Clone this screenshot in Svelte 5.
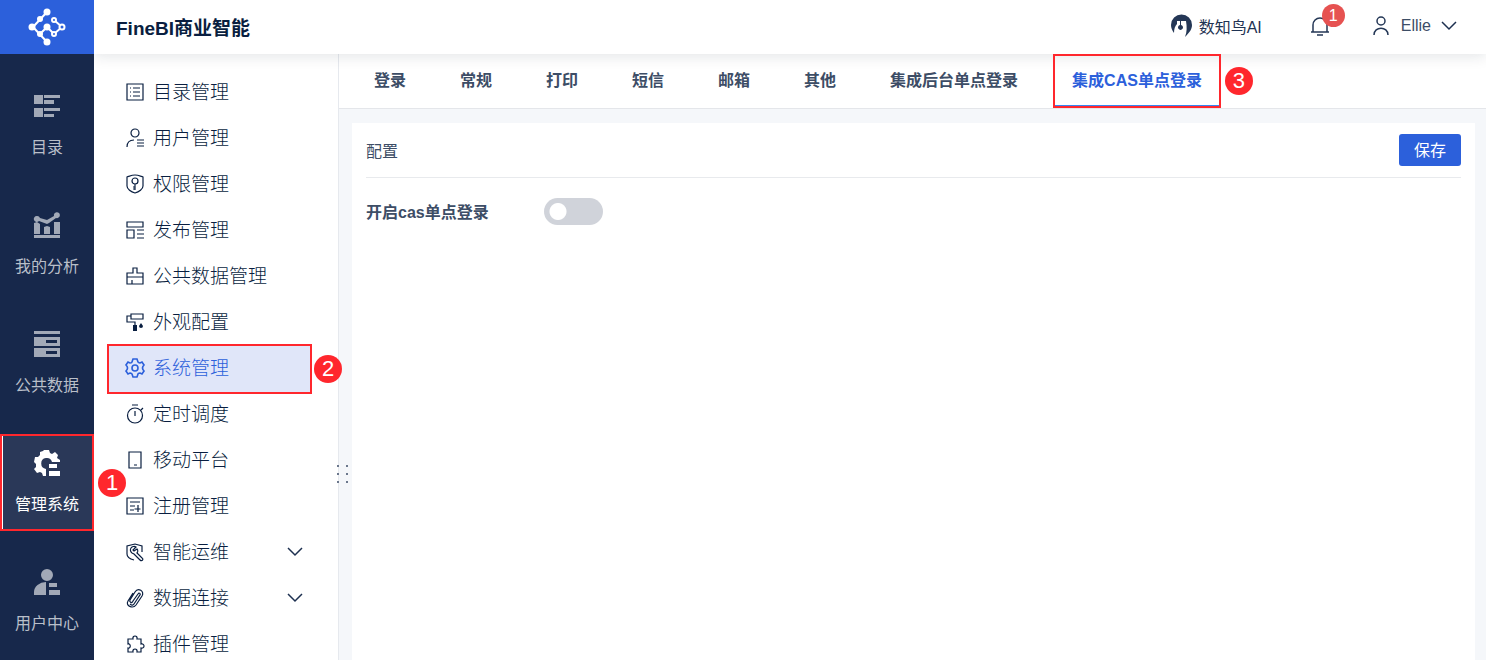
<script lang="ts">
  type Icon = { line?: string; fill?: string };

  const railItems: { label: string; icon: string; step?: number }[] = [
    {
      label: "目录",
      icon: "M0 2h9v9H0zM10 2h16v3H10zM10 7h10v4H10zM0 15h9v9H0zM10 15h16v3H10zM10 21h10v3H10z",
    },
    {
      label: "我的分析",
      icon: "M0 23h26v3H0zM0 11l3-1 3 2v10H0zM10 15l3-1 3 1v7h-6zM20 10h6v12h-6zM3 4a3 3 0 0 1 3 2l7 2 7-4a3 3 0 1 1 2 2l-7 5-2 1-8-3a3 3 0 1 1-2-5z",
    },
    {
      label: "公共数据",
      icon: "M0 0h26v3H0zM0 6h26v9H0zM12 9v3h11V9zM0 17h26v9H0zM12 20v3h11v-3z",
    },
    {
      label: "管理系统",
      step: 1,
      icon: "M10 0h5l1 3 2 1 3-2 3 3-1 3 3 2v2h-8a5.500 5.500 0 1 0-6 7v7H9l-1-3-2-1-3 1-3-4 2-2v-3l-2-2 1-5h3l2-2V2l3-1zM15 14h8v4h-8zM15 21h11v5H15z",
    },
    {
      label: "用户中心",
      icon: "M13 0a6 6 0 1 1 0 12 6 6 0 0 1 0-12zM12 13v13H0v-3a12 10 0 0 1 12-10zM15 14h8v4h-8zM15 21h11v5H15z",
    },
  ];

  const menu: { label: string; icon: Icon; step?: number; sub?: boolean }[] = [
    {
      label: "目录管理",
      icon: { line: "M1 1h16v16H1zM4 5h1M7 5h7M4 9h1M7 9h7M4 13h1M7 13h7" },
    },
    {
      label: "用户管理",
      icon: {
        line: "M9 0a4 4 0 1 1 0 8 4 4 0 0 1 0-8zM1 18c0-4 2-7 7-7M11 11h7M11 14h7M11 17h7",
      },
    },
    {
      label: "权限管理",
      icon: {
        line: "M9 0c3 0 5 1 8 2v9c0 3-4 6-8 7-4-1-8-4-8-7V2c3-1 5-2 8-2zM9 3a3 3 0 1 1 0 6 3 3 0 0 1 0-6zM9 9v6M9 12H7M9 14H7",
      },
    },
    {
      label: "发布管理",
      icon: { line: "M1 1h16v5H1zM1 9h7v8H1zM11 9h7M11 13h7M11 17h7" },
    },
    {
      label: "公共数据管理",
      icon: { line: "M1 6h6V1h4v5h6v11H1zM1 10h16M6 13v4" },
    },
    {
      label: "外观配置",
      icon: {
        line: "M5 1h12v5H5zM5 3H1v6h8v4",
        fill: "M7 12h4v6H7zM15 10l2 3a2 2 0 1 1-4 0z",
      },
    },
    {
      label: "系统管理",
      step: 2,
      icon: {
        line: "M7 0h4l1 3c1 1 1 1 2 1l2-1 2 3c-2 2-2 4 0 6l-2 3-2-1c-1 0-2 0-2 1l-1 3H7l-1-3c-1-1-1-1-2-1l-2 1-2-3c2-2 2-4 0-6l2-3 2 1c1 0 2 0 2-1zM9 6a3 3 0 1 1 0 6 3 3 0 0 1 0-6z",
      },
    },
    {
      label: "定时调度",
      icon: {
        line: "M9 3a7.500 7.500 0 1 1 0 15 7.500 7.500 0 0 1 0-15zM6 0h6M9 6v5M15 5l2-2",
      },
    },
    { label: "移动平台", icon: { line: "M3 1h12v16H3zM8 14h3" } },
    {
      label: "注册管理",
      icon: { line: "M1 1h16v16H1zM4 5h10M4 9h5M4 13h4M12 8v7M8.500 12h6" },
    },
    {
      label: "智能运维",
      sub: true,
      icon: {
        line: "M8 17C4 16 1 14 1 11V3l8-2 7 2v6M10 4a3.500 3.500 0 0 0-4 6l2 1 6 6c2 2 4-1 2-2l-5-5c1-1 1-3 0-4L8 8 7 7z",
      },
    },
    {
      label: "数据连接",
      sub: true,
      icon: {
        line: "M12 5l-5 7c-1 3-4 1-3-1l5-8c3-5 10-1 7 4l-6 9c-3 4-11 1-8-4l5-8M12 5c1-2 3 0 2 1l-6 9c-1 2-3 1-4 0",
      },
    },
    {
      label: "插件管理",
      icon: {
        line: "M2 4h5c-1-4 5-4 4 0h4v5c4-1 4 5 0 4v4h-4c1-4-5-4-4 0H2v-4c3 1 3-5 0-4z",
      },
    },
  ];

  const tabs: { label: string; step?: number }[] = [
    { label: "登录" },
    { label: "常规" },
    { label: "打印" },
    { label: "短信" },
    { label: "邮箱" },
    { label: "其他" },
    { label: "集成后台单点登录" },
    { label: "集成CAS单点登录", step: 3 },
  ];

  let section = $state("管理系统");
  let page = $state("系统管理");
  let tab = $state("集成CAS单点登录");
  let casEnabled = $state(false);
</script>

{#snippet chevron()}
  <svg class="chevron" viewBox="0 0 16 16" aria-hidden="true">
    <path d="M1 4l7 7 7-7" />
  </svg>
{/snippet}

<div class="shell">
  <nav class="rail">
    <a class="logo" href="#home" aria-label="FineBI">
      <svg viewBox="0 0 38 38">
        <path class="link" d="M5 19L19 4M5 19l14 15M19 19l-7 7M19 19l7 7 8-7-8-7" />
        <g class="solid">
          <circle cx="19" cy="4" r="3.500" />
          <circle cx="12" cy="11" r="3" />
          <circle cx="4" cy="19" r="3.500" />
          <circle cx="19" cy="19" r="3.500" />
          <circle cx="12" cy="26" r="3" />
          <circle cx="19" cy="34" r="3.500" />
        </g>
        <g class="ring">
          <circle cx="26" cy="12" r="2" />
          <circle cx="34" cy="19" r="2.500" />
          <circle cx="26" cy="26" r="2" />
        </g>
      </svg>
    </a>
    <div class="rail-list">
      {#each railItems as item}
        <button
          class="rail-item"
          class:active={section === item.label}
          onclick={() => (section = item.label)}
        >
          <svg viewBox="0 0 26 26" aria-hidden="true">
            <path d={item.icon} fill-rule="evenodd" />
          </svg>
          <span>{item.label}</span>
          {#if item.step}
            <i class="frame"></i>
            <b class="step">{item.step}</b>
          {/if}
        </button>
      {/each}
    </div>
  </nav>

  <div class="body">
    <header>
      <h1>FineBI商业智能</h1>
      <a class="bird" href="#ai">
        <svg viewBox="0 0 22 22" aria-hidden="true">
          <path
            d="M3 18C1 15 0 13 0 10a10.500 10.500 0 0 1 21 0c0 4-2 7-7 12 2-5 2-10 1-16h-5v4a2.500 2.500 0 1 1-1 0V6H6v3c-2 2-3 5-3 9z"
          />
        </svg>
        数知鸟AI
      </a>
      <button class="bell" aria-label="消息">
        <svg viewBox="0 0 20 20" aria-hidden="true">
          <path d="M1 16h18M3 16V9a7 7 0 0 1 14 0v7M7 19h6" />
        </svg>
        <span class="count">1</span>
      </button>
      <button class="account">
        <svg viewBox="0 0 18 20" aria-hidden="true">
          <circle cx="9" cy="5" r="4" />
          <path d="M2 19c0-9 14-9 14 0" />
        </svg>
        Ellie
        {@render chevron()}
      </button>
    </header>

    <div class="columns">
      <aside>
        {#each menu as item}
          <button
            class="menu-item"
            class:active={page === item.label}
            onclick={() => (page = item.label)}
          >
            <svg class="icon" viewBox="0 0 18 18" aria-hidden="true">
              {#if item.icon.line}<path class="line" d={item.icon.line} />{/if}
              {#if item.icon.fill}<path class="fill" d={item.icon.fill} />{/if}
            </svg>
            <span>{item.label}</span>
            {#if item.sub}{@render chevron()}{/if}
            {#if item.step}
              <i class="frame"></i>
              <b class="step">{item.step}</b>
            {/if}
          </button>
        {/each}
        <div class="grip">
          {#each Array(6) as _}<i></i>{/each}
        </div>
      </aside>

      <main>
        <div class="tabs" role="tablist">
          {#each tabs as item}
            <button
              role="tab"
              aria-selected={tab === item.label}
              class="tab"
              class:active={tab === item.label}
              onclick={() => (tab = item.label)}
            >
              {item.label}
              {#if item.step}
                <i class="frame"></i>
                <b class="step">{item.step}</b>
              {/if}
            </button>
          {/each}
        </div>
        <section class="card">
          <div class="card-head">
            <h2>配置</h2>
            <button class="save">保存</button>
          </div>
          <div class="field">
            <label for="cas">开启cas单点登录</label>
            <input id="cas" type="checkbox" role="switch" bind:checked={casEnabled} />
          </div>
        </section>
      </main>
    </div>
  </div>
</div>

<style>
  :global(body) {
    font-family: "Liberation Sans", "Noto Sans CJK SC", sans-serif;
    font-size: 16px;
    color: #3d4d66;
  }
  .shell {
    display: flex;
    height: 100vh;
    overflow: hidden;
    background: #fff;
  }
  button {
    position: relative;
    padding: 0;
    border: none;
    background: none;
    font: inherit;
    color: inherit;
    cursor: pointer;
  }
  svg {
    display: block;
    flex: none;
    overflow: visible;
  }

  /* numbered guide marks */
  .frame {
    position: absolute;
    inset: 0;
    z-index: 2;
    border: 2px solid #ff272d;
  }
  .step {
    position: absolute;
    top: calc(50% - 14px);
    left: calc(100% + 4px);
    z-index: 2;
    width: 28px;
    height: 28px;
    border-radius: 50%;
    background: #ff272d;
    color: #fff;
    font-size: 22px;
    font-weight: 400;
    line-height: 28px;
    text-align: center;
  }

  .rail {
    position: relative;
    z-index: 3;
    flex: none;
    width: 94px;
    background: #17284b;
  }
  .logo {
    display: flex;
    align-items: center;
    justify-content: center;
    height: 54px;
    background: #2c60db;
  }
  .logo svg {
    width: 38px;
    height: 38px;
  }
  .logo .link,
  .logo .ring {
    fill: none;
    stroke: #fff;
    stroke-width: 2;
  }
  .logo .ring {
    fill: #2c60db;
  }
  .logo .solid {
    fill: #fff;
  }
  .rail-list {
    display: flex;
    flex-direction: column;
    gap: 22px;
    padding-top: 23px;
  }
  .rail-item {
    display: flex;
    flex-direction: column;
    align-items: center;
    gap: 17px;
    padding: 16px 0 14px;
    line-height: 24px;
    color: #b9bfc9;
  }
  .rail-item svg {
    width: 26px;
    height: 26px;
    fill: #a2a9b7;
  }
  .rail-item.active {
    background: #2a3858;
    box-shadow: inset 3px 0 #fff;
    color: #fff;
  }
  .rail-item.active svg {
    fill: #fff;
  }

  .body {
    display: flex;
    flex: 1;
    flex-direction: column;
    min-width: 0;
  }
  header {
    position: relative;
    z-index: 1;
    display: flex;
    flex: none;
    align-items: center;
    box-sizing: border-box;
    height: 54px;
    padding: 0 29px 2px 22px;
    background: #fff;
    box-shadow: 0 2px 14px rgba(20, 30, 50, 0.12);
  }
  h1 {
    flex: 1;
    margin: 0;
    font-size: 19px;
    color: #091e40;
  }
  .bird {
    display: flex;
    align-items: center;
    gap: 6px;
    color: #1f3353;
    text-decoration: none;
  }
  .bird svg {
    width: 22px;
    height: 22px;
    fill: #243756;
  }
  .bell {
    margin: 0 41px 0 48px;
  }
  .bell svg,
  .account svg {
    width: 20px;
    height: 20px;
    fill: none;
    stroke: #243756;
    stroke-width: 1.500;
  }
  .count {
    position: absolute;
    top: -12px;
    left: 12px;
    width: 23px;
    height: 23px;
    border-radius: 50%;
    background: #e65251;
    color: #fff;
    line-height: 23px;
    text-align: center;
  }
  .account {
    display: flex;
    align-items: center;
    gap: 10px;
  }

  .chevron,
  .account .chevron {
    width: 16px;
    height: 16px;
    fill: none;
    stroke: #1d3050;
    stroke-width: 1.500;
  }
  .columns {
    display: flex;
    flex: 1;
    min-height: 0;
  }
  aside {
    position: relative;
    display: flex;
    flex: none;
    flex-direction: column;
    box-sizing: border-box;
    width: 245px;
    padding: 16px 28px 0 15px;
    border-right: 1px solid #e6e9ee;
  }
  .menu-item {
    display: flex;
    flex: none;
    align-items: center;
    gap: 9px;
    height: 46px;
    padding: 0 7px 0 17px;
    font-size: 19px;
    font-weight: 300;
    line-height: 28px;
    color: #091e40;
  }
  .menu-item span {
    flex: 1;
    text-align: left;
  }
  .menu-item svg {
    margin-bottom: 3px;
  }
  .menu-item .icon {
    width: 18px;
    height: 18px;
  }
  .menu-item .line {
    fill: none;
    stroke: currentColor;
    stroke-width: 1.200;
  }
  .menu-item .fill {
    fill: currentColor;
  }
  .menu-item.active {
    background: #e0e6f9;
    color: #2c60db;
  }
  .menu-item.active .line {
    stroke-width: 1.600;
  }
  .menu-item .frame {
    inset: -2px;
  }
  .grip {
    position: absolute;
    top: 411px;
    right: -10px;
    display: grid;
    grid-template-columns: 2px 2px;
    gap: 6px 7px;
  }
  .grip i {
    height: 2px;
    background: #6b778c;
  }

  main {
    display: flex;
    flex: 1;
    flex-direction: column;
    min-width: 0;
    background: #f5f7fa;
  }
  .tabs {
    display: flex;
    gap: 16px;
    height: 54px;
    padding-left: 16px;
    border-bottom: 1px solid #e4e6ea;
    background: #fff;
  }
  .tab {
    padding: 0 19px 4px;
    font-weight: 600;
    white-space: nowrap;
  }
  .tab.active {
    box-shadow: inset 0 -3px #3685f2;
    color: #2c60db;
  }
  .card {
    flex: 1;
    margin: 14px 11px 0 13px;
    padding: 0 14px;
    background: #fff;
  }
  .card-head {
    display: flex;
    align-items: center;
    justify-content: space-between;
    height: 54px;
    border-bottom: 1px solid #e8eaed;
  }
  h2 {
    margin: 0;
    font-size: 16px;
    font-weight: 400;
  }
  .save {
    width: 62px;
    height: 32px;
    padding-bottom: 3px;
    border-radius: 3px;
    background: #2c60db;
    color: #fff;
  }
  .field {
    display: flex;
    align-items: center;
    height: 66px;
  }
  label {
    width: 178px;
    font-weight: 600;
  }
  input {
    width: 59px;
    height: 27px;
    margin: 0;
    border-radius: 14px;
    background: radial-gradient(circle at 14px 50%, #fff 8px, transparent 9px) #d0d3da;
    appearance: none;
    cursor: pointer;
  }
  input:checked {
    background: radial-gradient(circle at 45px 50%, #fff 8px, transparent 9px) #2c60db;
  }
</style>
